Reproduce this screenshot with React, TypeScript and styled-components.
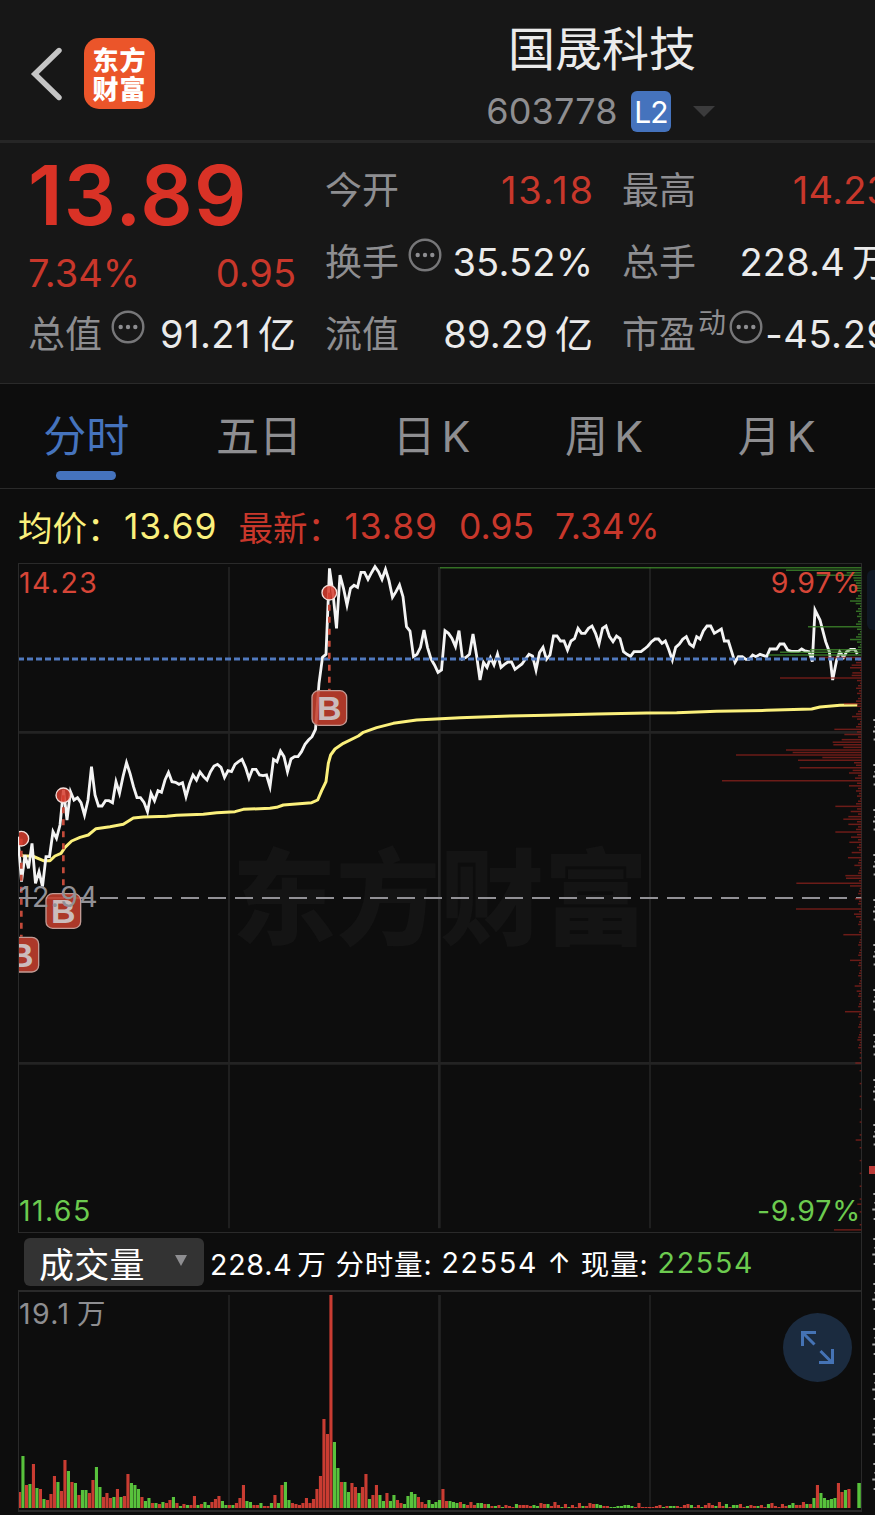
import React from "react";
import styled, { createGlobalStyle } from "styled-components";

const RED = "#d93226";
const SOFT_RED = "#c8372b";
const GREEN = "#6ccb4f";
const BLUE = "#4573bd";
const GREY = "#8e8e91";
const WHITE = "#ebebeb";

const GlobalStyle = createGlobalStyle`
  html, body { margin: 0; padding: 0; background: #0d0d0d; overflow: hidden; }
  * { box-sizing: border-box; }
  #root {
    font-family: Inter, "Noto Sans CJK SC", sans-serif;
    font-weight: 400;
  }
`;

const Page = styled.div`
  width: 875px;
  height: 1515px;
  overflow: hidden;
  background: #0d0d0d;
  color: ${WHITE};
  white-space: nowrap;
`;

const Header = styled.header`
  display: grid;
  grid-template-columns: 329px 546px;
  height: 143px;
  background: #171717;
  border-bottom: 3px solid #262626;
`;

const Brand = styled.div`
  display: flex;
  align-items: center;
  padding: 6px 0 0 30px;
  gap: 21px;
`;

const BackIcon = styled.svg`
  margin-top: 2px;
`;

const Logo = styled.div`
  display: grid;
  grid-template-columns: 27px 27px;
  align-content: center;
  justify-content: center;
  width: 71px;
  height: 71px;
  border-radius: 15px;
  background: #eb552a;
  color: #fff;
  font: 900 26px/29px "Noto Sans CJK SC", sans-serif;
`;

const TitleBlock = styled.div`
  display: flex;
  flex-direction: column;
  align-items: center;
`;

const StockName = styled.h1`
  margin: 19px 0 0;
  font-size: 47px;
  line-height: 60px;
  font-weight: 400;
`;

const CodeRow = styled.div`
  display: flex;
  align-items: center;
  height: 42px;
  margin: 11px 3px 0 0;
  gap: 13px;
  color: ${GREY};
  font-size: 36px;
  letter-spacing: 0.2px;
`;

const LevelBadge = styled.span`
  width: 40px;
  height: 41px;
  border-radius: 6px;
  background: ${BLUE};
  color: #fff;
  font-size: 30px;
  line-height: 42px;
  letter-spacing: -1px;
  text-align: center;
`;

const CodeArrow = styled.i`
  margin-left: 9px;
  border: 11px solid transparent;
  border-top: 11px solid #3b3b3c;
  border-bottom: 0;
`;

const Quote = styled.section`
  display: grid;
  grid-template-columns: repeat(3, 268px);
  column-gap: 29px;
  height: 241px;
  padding: 11px 0 0 28px;
  background: #171717;
  border-bottom: 1px solid #2a2a2a;
`;

const QuoteColumn = styled.div``;

const BigPrice = styled.div`
  height: 92px;
  color: ${RED};
  font-size: 82px;
  font-weight: 600;
  line-height: 83px;
  letter-spacing: 1.1px;
`;

const ChangeRow = styled.div`
  display: flex;
  justify-content: space-between;
  height: 52px;
  color: ${SOFT_RED};
  font-size: 38px;
  line-height: 54px;
`;

const StatRow = styled.div`
  display: flex;
  align-items: center;
  height: 72px;
`;

const StatLabel = styled.span`
  color: ${GREY};
  font-size: 37px;
  line-height: 72px;
  padding-top: 2px;
`;

const StatSup = styled.span`
  color: ${GREY};
  font-size: 28px;
  line-height: 28px;
  padding-bottom: 23px;
  margin: 0 -6px 0 2px;
`;

const StatValue = styled.span<{ $red?: boolean; $track: number }>`
  display: flex;
  gap: 7px;
  margin-left: auto;
  margin-right: ${(p) => -p.$track}px;
  color: ${(p) => (p.$red ? SOFT_RED : WHITE)};
  font-size: 38px;
  line-height: 72px;
  letter-spacing: ${(p) => p.$track}px;
`;

const MoreSvg = styled.svg`
  flex: none;
  width: 34px;
  height: 34px;
  margin: 0 0 15px 9px;
`;

const Tabs = styled.nav`
  display: flex;
  height: 105px;
  border-bottom: 1px solid #2a2a2a;
`;

const Tab = styled.div<{ $active?: boolean }>`
  display: flex;
  flex-direction: column;
  align-items: center;
  width: 172.6px;
  padding-top: 20px;
  color: ${(p) => (p.$active ? BLUE : GREY)};
  font-size: 43px;
  line-height: 64px;
  word-spacing: -6px;
  &::after {
    content: "";
    width: 60px;
    height: 9px;
    margin-top: 3px;
    border-radius: 5px;
    background: ${(p) => (p.$active ? BLUE : "transparent")};
  }
`;

const InfoRow = styled.div`
  display: flex;
  align-items: center;
  height: 74px;
  padding-left: 18px;
  gap: 21px;
  font-size: 35.5px;
  color: ${SOFT_RED};
`;

const InfoPair = styled.span<{ $avg?: boolean }>`
  display: flex;
  align-items: center;
  letter-spacing: 0.9px;
  color: ${(p) => (p.$avg ? "#fbf07c" : SOFT_RED)};
`;

const InfoLabel = styled.span`
  width: 106px;
  font-size: 34.5px;
  letter-spacing: 0;
`;

const Body = styled.div`
  display: grid;
  grid-template-columns: 844px 13px;
  padding-left: 18px;
`;

const PricePanel = styled.div`
  position: relative;
  width: 844px;
  height: 670px;
  border: 1px solid #2a2a2a;
`;

const Drawing = styled.svg`
  display: block;
  position: absolute;
  inset: -1px;
`;

const Watermark = styled.div`
  position: absolute;
  left: 213px;
  top: 253px;
  color: #141414;
  font: 900 104px/150px "Noto Sans CJK SC", sans-serif;
`;

const AxisLabel = styled.div<{ $x: "left" | "right"; $top: number; $color: string }>`
  position: absolute;
  ${(p) => p.$x}: 0;
  top: ${(p) => p.$top}px;
  color: ${(p) => p.$color};
  font-size: 28.5px;
  line-height: 36px;
  letter-spacing: ${(p) => (p.$x === "left" ? 1.4 : 0.8)}px;
  word-spacing: -3px;
`;

const VolumeBar = styled.div`
  display: flex;
  align-items: center;
  height: 57px;
  padding: 1px 0 0 6px;
  border-right: 1px solid #2a2a2a;
  color: #fff;
  font-size: 28.5px;
  word-spacing: -4px;
`;

const IndicatorSelect = styled.div`
  display: flex;
  align-items: center;
  justify-content: space-between;
  width: 180px;
  height: 48px;
  margin-right: 6px;
  padding: 0 17px 0 15px;
  border-radius: 6px;
  background: #333;
  font-size: 35px;
  letter-spacing: 0.2px;
  &::after {
    content: "";
    border: 6.5px solid transparent;
    border-top: 11px solid #8e8e91;
    border-bottom: 0;
    margin-top: -3px;
  }
`;

const VolumeItem = styled.span<{ $green?: boolean; $track?: number }>`
  margin-right: 9px;
  letter-spacing: ${(p) => p.$track ?? 0.8}px;
  color: ${(p) => (p.$green ? GREEN : "#fff")};
`;

const VolumePanel = styled.div`
  position: relative;
  width: 844px;
  height: 222px;
  border: solid #2a2a2a;
  border-width: 2px 1px;
`;

const ExpandButton = styled.button`
  position: absolute;
  left: 764px;
  top: 21px;
  width: 69px;
  height: 69px;
  padding: 0;
  border: 0;
  border-radius: 50%;
  background: #1b2b3f;
`;

const SideRail = styled.svg`
  display: block;
`;

/* Minute-by-minute price trace, in 1/3 px chart units. */
const STEP = 10.5;
const PRICE = [
  830, 965, 885, 925, 850, 970, 935, 980, 890, 890, 815, 835, 795, 690, 780, 695, 720, 713, 728, 765,
  720, 620, 705, 738, 738, 722, 722, 728, 665, 700, 650, 608, 640, 680, 713, 713, 727, 755, 700, 722,
  692, 697, 660, 637, 665, 667, 673, 668, 710, 672, 645, 660, 636, 650, 660, 635, 618, 613, 622, 652,
  632, 635, 613, 605, 598, 622, 655, 628, 628, 645, 647, 645, 680, 598, 605, 573, 590, 635, 597, 590,
  590, 575, 553, 540, 530, 508, 370, 292, 283, 25, 100, 205, 45, 85, 135, 85, 76, 82, 37, 37,
  58, 38, 20, 35, 58, 28, 62, 112, 95, 75, 110, 200, 213, 290, 283, 262, 210, 262, 297, 315,
  337, 330, 212, 220, 235, 260, 212, 297, 292, 283, 222, 285, 360, 307, 322, 293, 315, 282, 322, 313,
  306, 306, 328, 320, 312, 297, 283, 288, 330, 278, 262, 298, 285, 228, 228, 243, 243, 270, 243, 236,
  205, 220, 220, 205, 198, 220, 252, 205, 198, 230, 245, 228, 236, 275, 283, 289, 275, 275, 275, 267,
  258, 245, 237, 237,
];
const PRICE_TAIL =
  "1986,250 1996,243 2006,268 2017,300 2027,262 2038,252 2048,238 2059,230 2069,252 2080,260 2090,230 2100,237 2110,213 2121,198 2132,198 2143,220 2164,207 2173,243 2185,243 2195,275 2205,307 2215,290 2227,290 2238,298 2247,298 2258,285 2268,290 2280,283 2300,290 2310,267 2330,267 2340,252 2352,252 2363,270 2374,274 2395,274 2405,267 2415,273 2427,275 2437,305 2445,150 2460,180 2477,245 2488,275 2498,360 2510,300 2519,275 2531,292 2540,275 2552,268 2564,268 2572,282";
const pricePoints = PRICE.map((y, i) => `${(54 + i * STEP).toFixed(1)},${y}`).join(" ") + " " + PRICE_TAIL;

const AVERAGE =
  "57,880 70,888 97,888 130,902 150,902 165,888 183,880 195,862 215,843 240,832 265,825 288,806 330,800 370,793 400,774 430,771 500,769 530,766 610,763 650,758 705,755 730,748 810,745 830,742 850,735 935,728 953,720 965,692 978,665 985,610 992,585 1005,567 1030,550 1075,528 1090,517 1130,503 1180,490 1250,480 1380,473 1530,468 1640,466 1790,462 1940,459 2030,458 2150,454 2300,451 2435,447 2460,441 2520,436 2572,435";

/* Volume-at-price profile: price tick -> left edge; unlisted ticks are minor. */
const PROFILE: Record<number, number> = {
  0: 1320, 1: 2358, 2: 2540, 3: 2450, 4: 2560, 5: 2562, 6: 2568, 7: 2560, 8: 2564, 13: 2550, 14: 2567, 23: 2424,
  28: 2550, 32: 2430, 33: 2340, 34: 2305, 35: 2458, 38: 2555, 39: 2550, 41: 2557, 42: 2555, 43: 2340, 53: 2532,
  58: 2556, 63: 2503, 65: 2533, 67: 2525, 68: 2498, 69: 2500, 70: 2530, 71: 2358, 72: 2378, 73: 2208, 74: 2467,
  75: 2394, 76: 2562, 78: 2399, 79: 2558, 80: 2547, 82: 2565, 83: 2166, 85: 2547, 93: 2506, 95: 2552, 97: 2545,
  98: 2530, 100: 2545, 103: 2506, 105: 2553, 107: 2548, 111: 2555, 113: 2544, 116: 2563, 120: 2536, 121: 2538,
  123: 2389, 124: 2550, 129: 2565, 133: 2388, 135: 2562, 136: 2568, 143: 2530, 153: 2550, 163: 2564, 165: 2570,
  173: 2535, 184: 2572, 193: 2566, 223: 2567, 248: 2572, 258: 2502,
};
const profile = Array.from({ length: 259 }, (_, k) => {
  const minor = k < 110 ? 4 + ((k * 7) % 5) * 3 : k < 190 ? 2 + ((k * 5) % 4) * 2.5 : k % 5 === 1 ? 5 : 0;
  return { y: 23 + k * 7.7, x: PROFILE[k] ?? 2584 - minor, up: k < 35 };
});

const MARKERS = [
  { x: 64, dot: 836, box: 1184, from: 836, to: 1130 },
  { x: 190, dot: 706, box: 1053, from: 706, to: 1000 },
  { x: 988, dot: 98, box: 444, from: 98, to: 392 },
];

/* Volume heights in px, one per minute; a leading minus marks a falling minute. */
const VOLUME = [
  16, -52, 23, -24, 44, -20, 19, -9, 8, 14, 32, -26, 17, 48, -37, 26, -25, 13, -18, -18,
  15, 28, -41, -21, 11, 15, 10, -11, 19, -11, 12, 34, -25, -23, -19, 11, -7, -10, 5, -5,
  4, -6, 5, 8, -11, 5, -2, 4, -3, 3, 12, -3, 4, -6, -3, 6, 9, 12, -7, -3,
  3, -3, 5, 10, 23, -7, -6, 3, 3, -5, 2, 2, -5, 13, -5, 23, -26, -8, 5, 4,
  3, 5, 10, 5, 9, 19, 32, 89, 74, 213, -66, -40, 26, -26, -16, 25, 21, -15, 21,
  34, -9, 13, 23, -13, -7, 15, -7, -13, 8, 5, -4, -12, -16, -14, 11, 6, 4, -8, -4,
  -6, -8, 19, 7, -7, -6, -5, 6, -4, 3, 6, 3, -5, -5, 4, -4, 2, -2, 3, -1,
  3, 2, 1, -4, 3, 3, 3, 2, -3, -2, 5, 4, -4, 2, 6, 3, -1, 4, -1, 3,
  1, 5, -2, 2, 5, 4, -4, -3, 2, 2, -1, -1, -2, -2, -3, -3, -2,
  1, 5, 1, 1, 1, 1, 2, 3, -1, 2, -2, -2, 2, 1, 3, 4, -3, 1, 3, -1,
  3, 5, 3, -2, 6, 2, -4, 1, -3, -3, 4, 1, -2, 3, 2, -2, 3, 1, -4, 5,
  2, 1, 4, 2, -3, -5, 3, 3, 6, -4, 4, -10, 23, -15, -10, -8, -9, -10, 25, 16,
  -18, 19,
];

const More = () => (
  <MoreSvg viewBox="0 0 34 34" fill="none">
    <circle cx="17" cy="17" r="15.3" stroke="#777779" strokeWidth="2.4" />
    <g fill="#8e8e91">
      <circle cx="9.7" cy="17" r="2.2" />
      <circle cx="17" cy="17" r="2.2" />
      <circle cx="24.3" cy="17" r="2.2" />
    </g>
  </MoreSvg>
);

type StatProps = {
  label: string;
  sup?: string;
  more?: boolean;
  value: string;
  unit?: string;
  red?: boolean;
  track?: number;
};
const Stat = ({ label, sup, more, value, unit, red, track = 0.2 }: StatProps) => (
  <StatRow>
    <StatLabel>{label}</StatLabel>
    {sup && <StatSup>{sup}</StatSup>}
    {more && <More />}
    <StatValue $red={red} $track={track}>
      <span>{value}</span>
      {unit && <span>{unit}</span>}
    </StatValue>
  </StatRow>
);

const PriceChart = () => (
  <PricePanel>
    <Watermark>东方财富</Watermark>
    <Drawing width="844" height="670" viewBox="54 9 2532 2010" fill="none">
      <g stroke="#232323">
        <path d="M687 21V2005M1950 21V2005" strokeWidth="5" />
        <path d="M1318 21V2005M57 517H2584M57 1510H2584" strokeWidth="8" />
      </g>
      <path d="M57 1014H2584" stroke="#929196" strokeWidth="5.5" strokeDasharray="54 27" />
      <polyline points={AVERAGE} stroke="#fbf07c" strokeWidth="9" strokeLinejoin="round" />
      <polyline points={pricePoints} stroke="#f4f4f4" strokeWidth="8.5" strokeLinejoin="miter" strokeMiterlimit="5" />
      <g strokeWidth="4.5">
        {profile.map((b) => (
          <path key={b.y} d={`M${b.x} ${b.y}H2584`} stroke={b.up ? "#3f8a2c" : "#8c211c"} opacity={b.up ? 0.8 : 0.75} />
        ))}
      </g>
      <path d="M57 297H2584" stroke="#5079bd" strokeWidth="8.5" strokeDasharray="18 9" strokeDashoffset="3" />
      <clipPath id="plot">
        <path d="M57 12H2584V2010H57z" />
      </clipPath>
      <g clipPath="url(#plot)">
        {MARKERS.map((m) => (
          <g key={m.x}>
            <path d={`M${m.x} ${m.from}V${m.to}`} stroke="#c34a3a" strokeWidth="8" strokeDasharray="18 18" />
            <circle cx={m.x} cy={m.dot} r="22" fill="#d63e2e" fillOpacity=".86" stroke="#f5dfdb" strokeWidth="4" />
            <rect x={m.x - 52} y={m.box - 52} width="104" height="104" rx="20" fill="#c33f2d" fillOpacity=".88" stroke="#c19a94" strokeWidth="4" />
            <text x={m.x} y={m.box + 36} textAnchor="middle" fontFamily="Liberation Sans, sans-serif" fontWeight="700" fontSize="102" fill="#cbbcbc">
              B
            </text>
          </g>
        ))}
      </g>
    </Drawing>
    <AxisLabel $x="left" $top={1} $color="#d64537">14.23</AxisLabel>
    <AxisLabel $x="right" $top={1} $color="#d64537">9.97%</AxisLabel>
    <AxisLabel $x="left" $top={315} $color="#929196">12.94</AxisLabel>
    <AxisLabel $x="left" $top={629} $color={GREEN}>11.65</AxisLabel>
    <AxisLabel $x="right" $top={629} $color={GREEN}>-9.97%</AxisLabel>
  </PricePanel>
);

const VolumeChart = () => (
  <VolumePanel>
    <Drawing width="844" height="220" viewBox="0 1 844 220">
      <path d="M211 5V219M632 5V219" stroke="#232323" strokeWidth="1.7" />
      <path d="M421.5 5V219" stroke="#232323" strokeWidth="2.7" />
      {VOLUME.map((v, i) => (
        <rect
          key={i}
          x={Math.max(1, i * 3.5 - 0.1).toFixed(2)}
          y={218 - Math.abs(v)}
          width={i === 0 ? 2.2 : 3.1}
          height={Math.abs(v)}
          fill={v < 0 ? "#58c23c" : "#c93c32"}
        />
      ))}
      <rect x="839.3" y="193" width="3.5" height="25" fill="#58c23c" />
    </Drawing>
    <AxisLabel $x="left" $top={4} $color={GREY}>19.1 万</AxisLabel>
    <ExpandButton>
      <svg width="69" height="69" viewBox="0 0 69 69" fill="none" stroke="#4573b5" strokeWidth="3">
        <path d="M19.5 33V19.5H33M20 20L31.5 31.5M37.5 38L49 49.5M36 49.5H49.5V36" />
      </svg>
    </ExpandButton>
  </VolumePanel>
);

/* Sliver of the order-book panel that begins past the right edge of the charts. */
const railMarks = [
  ...Array.from({ length: 10 }, (_, i) => i * 45 + 156),
  ...Array.from({ length: 7 }, (_, i) => i * 45 + 630),
];
const Rail = () => (
  <SideRail width="13" height="949" viewBox="0 0 13 949">
    <rect x="5" y="7" width="20" height="60" rx="6" fill="#101824" />
    {railMarks.map((y, i) => (
      <g key={y} fill="#a9a9a9">
        <rect x="11.3" y={y} width="2" height="2" />
        <rect x="12.3" y={y + (i < 10 ? 7 : 9)} width="1" height="1.6" />
        <rect x={i < 10 ? 11 : 10.3} y={y + (i < 10 ? 11.5 : 15.5)} width="3" height="2" />
        <rect x="11.6" y={y + (i < 10 ? 19.5 : 25)} width="2" height="2" />
      </g>
    ))}
    <rect x="7" y="603" width="6" height="8" fill="#bd3b38" />
  </SideRail>
);

export default function App() {
  return (
    <Page>
      <GlobalStyle />
      <Header>
        <Brand>
          <BackIcon width="33" height="54" viewBox="0 0 33 54" fill="none" stroke="#c5c5c5" strokeWidth="5.4">
            <path d="M29 3.5L4.8 27L29 50.5" strokeLinecap="round" />
          </BackIcon>
          <Logo>
            <span>东</span>
            <span>方</span>
            <span>财</span>
            <span>富</span>
          </Logo>
        </Brand>
        <TitleBlock>
          <StockName>国晟科技</StockName>
          <CodeRow>
            603778
            <LevelBadge>L2</LevelBadge>
            <CodeArrow />
          </CodeRow>
        </TitleBlock>
      </Header>
      <Quote>
        <QuoteColumn>
          <BigPrice>13.89</BigPrice>
          <ChangeRow>
            <span>7.34%</span>
            <span>0.95</span>
          </ChangeRow>
          <Stat label="总值" more value="91.21" unit="亿" track={0.5} />
        </QuoteColumn>
        <QuoteColumn>
          <Stat label="今开" value="13.18" red track={1.8} />
          <Stat label="换手" more value="35.52%" />
          <Stat label="流值" value="89.29" unit="亿" />
        </QuoteColumn>
        <QuoteColumn>
          <Stat label="最高" value="14.23" red />
          <Stat label="总手" value="228.4" unit="万" />
          <Stat label="市盈" sup="动" more value="-45.29" track={0.6} />
        </QuoteColumn>
      </Quote>
      <Tabs>
        <Tab $active>分时</Tab>
        <Tab>五日</Tab>
        <Tab>日 K</Tab>
        <Tab>周 K</Tab>
        <Tab>月 K</Tab>
      </Tabs>
      <InfoRow>
        <InfoPair $avg>
          <InfoLabel>均价：</InfoLabel>13.69
        </InfoPair>
        <InfoPair>
          <InfoLabel>最新：</InfoLabel>13.89
        </InfoPair>
        <span>0.95</span>
        <span>7.34%</span>
      </InfoRow>
      <Body>
        <div>
          <PriceChart />
          <VolumeBar>
            <IndicatorSelect>成交量</IndicatorSelect>
            <VolumeItem>228.4 万</VolumeItem>
            <VolumeItem>分时量:</VolumeItem>
            <VolumeItem $track={1.8}>22554</VolumeItem>
            <VolumeItem>↑</VolumeItem>
            <VolumeItem>现量:</VolumeItem>
            <VolumeItem $green $track={1.8}>22554</VolumeItem>
          </VolumeBar>
          <VolumeChart />
        </div>
        <Rail />
      </Body>
    </Page>
  );
}
